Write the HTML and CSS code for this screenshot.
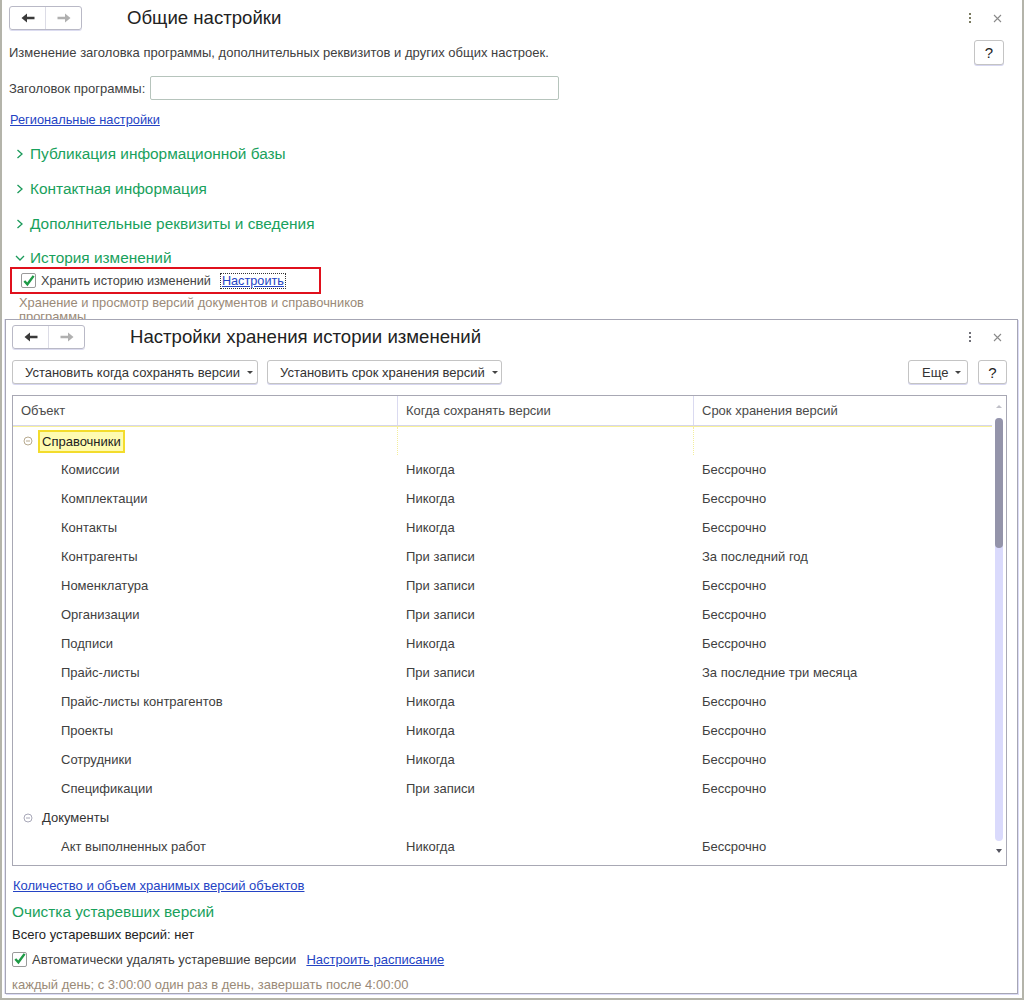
FILE: index.html
```html
<!DOCTYPE html>
<html lang="ru">
<head>
<meta charset="utf-8">
<title>Общие настройки</title>
<link rel="stylesheet" href="styles.css">
</head>
<body>
<div class="win outer">
  <div class="hdr">
    <div class="nav">
      <span class="nav-half"><svg width="14" height="10" viewBox="0 0 14 10"><path d="M0.5 5 L6 0.5 L6 3.8 L13.5 3.8 L13.5 6.2 L6 6.2 L6 9.5 Z" fill="#3a3a3a"/></svg></span>
      <span class="nav-half"><svg width="14" height="10" viewBox="0 0 14 10"><path d="M13.5 5 L8 0.5 L8 3.8 L0.5 3.8 L0.5 6.2 L8 6.2 L8 9.5 Z" fill="#b0b0b0"/></svg></span>
    </div>
    <div class="title">Общие настройки</div>
    <div class="hdr-tools">
      <span class="kebab"><i></i><i></i><i></i></span>
      <svg class="close" width="9" height="9" viewBox="0 0 9 9"><path d="M1 1 L8 8 M8 1 L1 8" stroke="#8a8a8a" stroke-width="1.1"/></svg>
    </div>
  </div>

  <div class="desc-row">
    <span class="text">Изменение заголовка программы, дополнительных реквизитов и других общих настроек.</span>
    <span class="btn help">?</span>
  </div>

  <div class="field-row">
    <span class="text">Заголовок программы:</span>
    <span class="input"></span>
  </div>

  <div class="link-row"><a class="link">Региональные настройки</a></div>

  <div class="section"><svg class="chev" width="8" height="10" viewBox="0 0 8 10"><path d="M1.5 1 L6 5 L1.5 9" fill="none" stroke="#1a9a5a" stroke-width="1.3"/></svg><span>Публикация информационной базы</span></div>
  <div class="section"><svg class="chev" width="8" height="10" viewBox="0 0 8 10"><path d="M1.5 1 L6 5 L1.5 9" fill="none" stroke="#1a9a5a" stroke-width="1.3"/></svg><span>Контактная информация</span></div>
  <div class="section"><svg class="chev" width="8" height="10" viewBox="0 0 8 10"><path d="M1.5 1 L6 5 L1.5 9" fill="none" stroke="#1a9a5a" stroke-width="1.3"/></svg><span>Дополнительные реквизиты и сведения</span></div>
  <div class="section open"><svg class="chev" width="10" height="8" viewBox="0 0 10 8"><path d="M1 2 L5 6 L9 2" fill="none" stroke="#1a9a5a" stroke-width="1.3"/></svg><span>История изменений</span></div>

  <div class="redbox">
    <span class="check"><svg width="14" height="14" viewBox="0 0 14 14"><path d="M2.5 7 L5.8 10.5 L12.5 1.5" fill="none" stroke="#1e9a46" stroke-width="2.6"/></svg></span>
    <span class="text">Хранить историю изменений</span>
    <a class="link focus">Настроить</a>
  </div>
  <div class="note indent">Хранение и просмотр версий документов и справочников<br>программы</div>

  <div class="win inner">
    <div class="hdr">
      <div class="nav">
        <span class="nav-half"><svg width="14" height="10" viewBox="0 0 14 10"><path d="M0.5 5 L6 0.5 L6 3.8 L13.5 3.8 L13.5 6.2 L6 6.2 L6 9.5 Z" fill="#3a3a3a"/></svg></span>
        <span class="nav-half"><svg width="14" height="10" viewBox="0 0 14 10"><path d="M13.5 5 L8 0.5 L8 3.8 L0.5 3.8 L0.5 6.2 L8 6.2 L8 9.5 Z" fill="#b0b0b0"/></svg></span>
      </div>
      <div class="title">Настройки хранения истории изменений</div>
      <div class="hdr-tools">
        <span class="kebab grey"><i></i><i></i><i></i></span>
        <svg class="close" width="9" height="9" viewBox="0 0 9 9"><path d="M1 1 L8 8 M8 1 L1 8" stroke="#8a8a8a" stroke-width="1.1"/></svg>
      </div>
    </div>

    <div class="toolbar">
      <span class="btn drop w1">Установить когда сохранять версии <b class="tri"></b></span>
      <span class="btn drop w2">Установить срок хранения версий <b class="tri"></b></span>
      <span class="spacer"></span>
      <span class="btn drop w3">Еще <b class="tri"></b></span>
      <span class="btn help">?</span>
    </div>

    <div class="table">
      <div class="tmain">
        <div class="trow thead">
          <div class="cell">Объект</div>
          <div class="cell">Когда сохранять версии</div>
          <div class="cell last">Срок хранения версий</div>
        </div>
        <div class="trow group current">
          <div class="cell c1"><svg class="grp" width="10" height="10" viewBox="0 0 10 10"><circle cx="5" cy="5" r="4" fill="none" stroke="#b8ab90"/><path d="M3 5 H7" stroke="#b8ab90"/></svg><span class="hl">Справочники</span></div>
          <div class="cell"></div>
          <div class="cell last"></div>
        </div>
        <div class="trow"><div class="cell c1 child">Комиссии</div><div class="cell">Никогда</div><div class="cell last">Бессрочно</div></div>
        <div class="trow"><div class="cell c1 child">Комплектации</div><div class="cell">Никогда</div><div class="cell last">Бессрочно</div></div>
        <div class="trow"><div class="cell c1 child">Контакты</div><div class="cell">Никогда</div><div class="cell last">Бессрочно</div></div>
        <div class="trow"><div class="cell c1 child">Контрагенты</div><div class="cell">При записи</div><div class="cell last">За последний год</div></div>
        <div class="trow"><div class="cell c1 child">Номенклатура</div><div class="cell">При записи</div><div class="cell last">Бессрочно</div></div>
        <div class="trow"><div class="cell c1 child">Организации</div><div class="cell">При записи</div><div class="cell last">Бессрочно</div></div>
        <div class="trow"><div class="cell c1 child">Подписи</div><div class="cell">Никогда</div><div class="cell last">Бессрочно</div></div>
        <div class="trow"><div class="cell c1 child">Прайс-листы</div><div class="cell">При записи</div><div class="cell last">За последние три месяца</div></div>
        <div class="trow"><div class="cell c1 child">Прайс-листы контрагентов</div><div class="cell">Никогда</div><div class="cell last">Бессрочно</div></div>
        <div class="trow"><div class="cell c1 child">Проекты</div><div class="cell">Никогда</div><div class="cell last">Бессрочно</div></div>
        <div class="trow"><div class="cell c1 child">Сотрудники</div><div class="cell">Никогда</div><div class="cell last">Бессрочно</div></div>
        <div class="trow"><div class="cell c1 child">Спецификации</div><div class="cell">При записи</div><div class="cell last">Бессрочно</div></div>
        <div class="trow group">
          <div class="cell c1"><svg class="grp" width="10" height="10" viewBox="0 0 10 10"><circle cx="5" cy="5" r="4" fill="none" stroke="#a8a8b8"/><path d="M3 5 H7" stroke="#a8a8b8"/></svg><span class="gname">Документы</span></div>
          <div class="cell"></div>
          <div class="cell last"></div>
        </div>
        <div class="trow"><div class="cell c1 child">Акт выполненных работ</div><div class="cell">Никогда</div><div class="cell last">Бессрочно</div></div>
      </div>
      <div class="scroll">
        <span class="arrow up"></span>
        <div class="track"><div class="thumb"></div></div>
        <span class="arrow down"></span>
      </div>
    </div>

    <div class="link-row2"><a class="link">Количество и объем хранимых версий объектов</a></div>
    <div class="heading">Очистка устаревших версий</div>
    <div class="plain">Всего устаревших версий: нет</div>
    <div class="check-row">
      <span class="check"><svg width="14" height="14" viewBox="0 0 14 14"><path d="M2.5 7 L5.8 10.5 L12.5 1.5" fill="none" stroke="#1e9a46" stroke-width="2.6"/></svg></span>
      <span class="text">Автоматически удалять устаревшие версии</span>
      <a class="link">Настроить расписание</a>
    </div>
    <div class="note">каждый день; с 3:00:00 один раз в день, завершать после 4:00:00</div>
  </div>
</div>
</body>
</html>
```
FILE: styles.css
```css
* { box-sizing: border-box; }
html, body { margin: 0; padding: 0; background: #fff; }
body {
  font-family: "Liberation Sans", Arial, sans-serif;
  font-size: 13px;
  color: #404040;
}

.win { background: #fff; }
.outer {
  position: relative;
  width: 1024px;
  height: 1000px;
  border-left: 2px solid #b4b4aa;
  border-right: 2px solid #b4b4aa;
  border-bottom: 2px solid #b4b4aa;
  padding-left: 7px;
  padding-right: 18px;
  overflow: hidden;
}

.hdr {
  display: flex;
  align-items: center;
  height: 24px;
  margin-top: 6px;
}
.nav {
  display: flex;
  width: 73px;
  height: 24px;
  border: 1px solid #b9b9c6;
  border-radius: 3px;
  box-shadow: 0 1px 0 #dcdcf0;
}
.nav-half {
  flex: 1;
  display: flex;
  align-items: center;
  justify-content: center;
}
.nav-half + .nav-half { border-left: 1px solid #dcdce6; }
.title {
  margin-left: 45px;
  font-size: 18.6px;
  color: #222;
}
.hdr-tools {
  margin-left: auto;
  display: flex;
  align-items: center;
  gap: 22px;
  padding-right: 2px;
}
.kebab {
  display: flex;
  flex-direction: column;
  gap: 2px;
}
.kebab i {
  display: block;
  width: 2px;
  height: 2px;
  background: #7a7a60;
}
.kebab.grey i { background: #707078; }

.text { white-space: nowrap; }

.desc-row {
  display: flex;
  align-items: center;
  height: 25px;
  margin-top: 10px;
}
.btn {
  display: flex;
  align-items: center;
  height: 25px;
  border: 1px solid #c4c4c4;
  border-radius: 3px;
  box-shadow: 0 1px 0 #d6d6f0;
  background: #fff;
  color: #333;
  white-space: nowrap;
}
.help {
  margin-left: auto;
  width: 30px;
  justify-content: center;
  font-size: 15px;
  color: #222;
}

.field-row {
  display: flex;
  align-items: center;
  height: 24px;
  margin-top: 11px;
  gap: 5px;
}
.input {
  display: block;
  width: 409px;
  height: 24px;
  border: 1px solid #b6c4bc;
  border-radius: 2px;
}

.link {
  color: #2443c4;
  text-decoration: underline;
  white-space: nowrap;
}
.link-row {
  height: 20px;
  margin-top: 9px;
  display: flex;
  align-items: center;
  padding-left: 1px;
  font-size: 12.8px;
}

.section {
  display: flex;
  align-items: center;
  height: 20px;
  margin-top: 15px;
  font-size: 15.4px;
  color: #19a15c;
}
.section .chev { margin-left: 7px; margin-right: 6px; }
.section.open { margin-top: 14px; }
.section.open .chev { margin-left: 6px; margin-right: 5px; }

.redbox {
  display: flex;
  align-items: center;
  width: 311px;
  height: 27px;
  margin-top: -1px;
  margin-left: 1px;
  border: 2px solid #e0101c;
  padding-left: 9px;
  font-size: 12.7px;
}
.check {
  display: flex;
  align-items: center;
  justify-content: center;
  width: 15px;
  height: 15px;
  border: 1px solid #9a9a9a;
  border-radius: 2px;
  margin-right: 5px;
  background: #fff;
}
.redbox .text { color: #444; }
.focus {
  margin-left: 9px;
  border: 1px dotted #333;
  line-height: 14px;
  padding: 0 1px;
}

.note {
  color: #9a8a78;
  line-height: 14px;
  white-space: nowrap;
}
.note.indent { padding-left: 10px; margin-top: 2px; font-size: 12.9px; }

/* inner window */
.inner {
  position: absolute;
  left: 3px;
  top: 319px;
  width: 1013px;
  height: 675px;
  border: 1px solid #a6a6b4;
  box-shadow: 1px 1px 0 #dcdcf6, -1px 0 0 #e2e2f4;
  padding: 0 10px 0 6px;
}
.inner .hdr { margin-top: 5px; }
.inner .hdr-tools { gap: 22px; padding-right: 5px; }

.toolbar {
  display: flex;
  align-items: center;
  gap: 9px;
  margin-top: 11px;
  height: 24px;
}
.toolbar .btn { height: 24px; }
.drop { padding-left: 12px; }
.w1 { width: 246px; }
.w2 { width: 235px; }
.w3 { width: 60px; padding-left: 13px; }
.spacer { flex: 1; }
.toolbar .help { margin-left: 1px; width: 29px; }
.tri {
  display: inline-block;
  width: 0;
  height: 0;
  border-left: 3px solid transparent;
  border-right: 3px solid transparent;
  border-top: 3px solid #444;
  margin-left: 7px;
}

.table {
  display: flex;
  margin-top: 11px;
  height: 471px;
  width: 995px;
  border: 1px solid #a8a8b4;
  overflow: hidden;
}
.tmain { flex: 1; }
.trow {
  display: grid;
  grid-template-columns: 385px 296px 1fr;
  height: 29px;
}
.cell {
  display: flex;
  align-items: center;
  padding-left: 8px;
  white-space: nowrap;
  color: #404040;
}
.thead {
  height: 30px;
  border-bottom: 1px solid #d6d6ec;
}
.thead .cell {
  border-right: 1px solid #dadaf0;
  color: #4a4a4a;
}
.thead .cell.last { border-right: none; }
.current {
  border-top: 1px solid #f7f09c;
}
.current .cell { border-right: 1px dotted #f3ed9c; }
.current .cell.last { border-right: none; }
.c1 { padding-left: 10px; }
.child { padding-left: 48px; }
.grp { margin-right: 5px; }
.hl {
  display: flex;
  align-items: center;
  height: 23px;
  padding: 0 2px;
  border: 2px solid #f3dc2c;
  background: #fefbb0;
  color: #222;
}
.gname { padding-left: 4px; color: #333; }
.group .c1 { padding-left: 10px; }

.scroll {
  width: 14px;
  display: flex;
  flex-direction: column;
  align-items: center;
}
.arrow {
  display: block;
  width: 0;
  height: 0;
  border-left: 3px solid transparent;
  border-right: 3px solid transparent;
}
.arrow.up {
  margin-top: 9px;
  border-bottom: 3px solid #c0c0c8;
}
.arrow.down {
  margin-top: 8px;
  border-top: 4px solid #555560;
}
.track {
  margin-top: 10px;
  width: 8px;
  height: 423px;
  background: #dadafc;
  border-radius: 4px;
}
.thumb {
  width: 8px;
  height: 130px;
  background: #9494aa;
  border-radius: 4px;
}

.link-row2 {
  height: 18px;
  display: flex;
  align-items: center;
  margin-top: 10px;
  padding-left: 1px;
}
.heading {
  height: 20px;
  display: flex;
  align-items: center;
  margin-top: 8px;
  font-size: 15.4px;
  color: #19a15c;
}
.plain {
  height: 16px;
  margin-top: 4px;
  display: flex;
  align-items: center;
  color: #222;
}
.check-row {
  display: flex;
  align-items: center;
  height: 18px;
  margin-top: 8px;
}
.check-row .link { margin-left: 10px; }
.inner .note {
  margin-top: 9px;
  height: 16px;
  display: flex;
  align-items: center;
}
```
